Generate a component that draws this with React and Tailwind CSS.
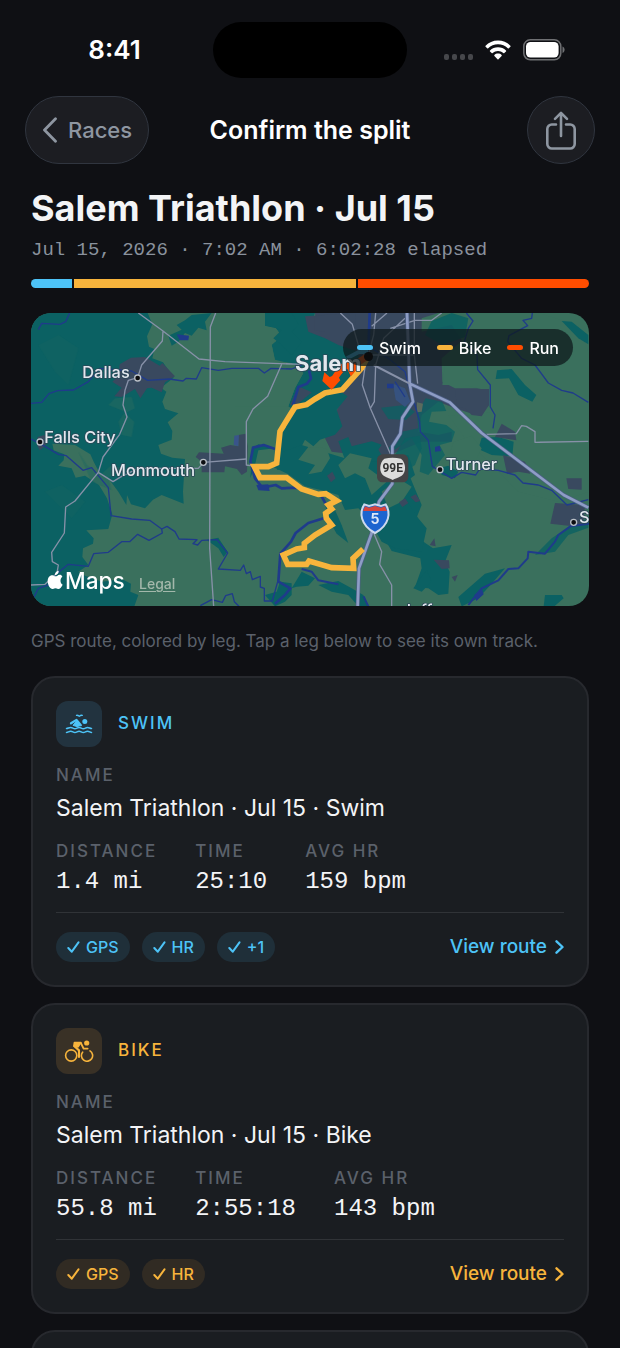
import React from "react";

const SANS = "font-['Inter','Liberation_Sans',sans-serif]";
const MONO = "font-['Liberation_Mono',monospace]";

function WifiIcon() {
  return (
    <svg viewBox="0 0 26 20" className="h-5 w-[26px]" fill="#fff" aria-hidden="true">
      <path d="M13 0.6C18 0.6 22.4 2.6 25.4 5.7c.3.3.3.7 0 1l-1.6 1.6c-.3.3-.7.3-1 0C20.200 5.700 16.800 4.300 13 4.300S5.800 5.700 3.200 8.300c-.3.3-.7.3-1 0L.6 6.700c-.3-.3-.3-.7 0-1C3.600 2.600 8 .6 13 .6z" />
      <path d="M13 7.200c3.100 0 5.900 1.200 8 3.200.3.3.3.700 0 1l-1.700 1.600c-.3.3-.700.3-1 0-1.400-1.300-3.300-2.100-5.300-2.100s-3.900.800-5.300 2.100c-.3.3-.700.3-1 0L5 11.400c-.3-.3-.3-.700 0-1 2.100-2 4.900-3.200 8-3.200z" />
      <path d="M13 13.600c1.400 0 2.700.5 3.600 1.400.3.3.3.700 0 1l-3.100 3.200c-.3.3-.700.3-1 0L9.400 16c-.3-.3-.3-.700 0-1 .9-.9 2.200-1.400 3.600-1.400z" />
    </svg>
  );
}

function BatteryIcon() {
  return (
    <svg viewBox="0 0 42 22" className="h-[22px] w-[42px]" aria-hidden="true">
      <rect x="0.800" y="0.800" width="37" height="20" rx="6.500" fill="none" stroke="#6f7073" strokeWidth="1.500" />
      <rect x="3" y="3" width="32.600" height="15.600" rx="4.500" fill="#fff" />
      <path d="M39.500 7.500c1.300.5 2.100 1.800 2.100 3.300s-.8 2.800-2.100 3.300z" fill="#6f7073" />
    </svg>
  );
}

function StatusBar() {
  return (
    <div className="grid grid-cols-[1fr_auto_1fr] items-center pt-[22px]">
      <div className="pl-4 text-center text-[26px] font-semibold leading-8 text-white">8:41</div>
      <div className="h-14 w-[194px] rounded-full bg-black" />
      <div className="flex items-center justify-end gap-3 pr-[55px]">
        <div className="flex gap-[3px] pt-[13px]">
          {[0, 1, 2, 3].map((n) => (
            <span key={n} className="h-[6px] w-[5px] rounded-[2px] bg-[#46474b]" />
          ))}
        </div>
        <WifiIcon />
        <BatteryIcon />
      </div>
    </div>
  );
}

function NavBar() {
  return (
    <header className="grid grid-cols-[1fr_auto_1fr] items-center px-[25px] pt-[18px]">
      <button
        type="button"
        className="flex h-[68px] w-[124px] items-center gap-[10px] rounded-full border border-[#30353f] bg-[#1c1d22] pl-4 text-[22px] font-medium text-[#8e96a1]"
      >
        <svg viewBox="0 0 16 26" className="h-[26px] w-4" fill="none" stroke="currentColor" strokeWidth="2.800" strokeLinecap="round" strokeLinejoin="round" aria-hidden="true">
          <path d="M13.500 1.800 2.500 13l11 11.200" />
        </svg>
        Races
      </button>
      <h2 className="text-[25px] font-semibold leading-8 text-white">Confirm the split</h2>
      <button
        type="button"
        aria-label="Share"
        className="flex size-[68px] items-center justify-center justify-self-end rounded-full border border-[#30353f] bg-[#1c1d22] text-[#8e96a1]"
      >
        <svg viewBox="0 0 32 40" className="h-10 w-8" fill="none" stroke="currentColor" strokeWidth="2.600" strokeLinecap="round" strokeLinejoin="round" aria-hidden="true">
          <path d="M11 14.500H7A4.500 4.500 0 0 0 2.300 19V34A4.500 4.500 0 0 0 7 38.500h18a4.500 4.500 0 0 0 4.700-4.500V19a4.500 4.500 0 0 0-4.700-4.500h-4M16 26V3M10 8.800 16 2.800l6 6" />
        </svg>
      </button>
    </header>
  );
}

const TEAL = "#0b6163";
const URBAN = "#39495f";
const GREEN = "#3a705d";

function MapDrawing() {
  return (
    <svg viewBox="18 24 1674 879" className="block h-auto w-full" role="img" aria-label="GPS route near Salem">
      <rect x="18" y="24" width="1674" height="880" fill={GREEN} />

      {/* forest, west side */}
      <g fill={TEAL}>
        <path d="M18 24H368L382 58 366 94 372 125 388 132 382 160 414 172 446 218 408 248 424 260 412 290 420 312 460 325 428 352 442 378 440 404 400 420 408 446 442 458 480 462 474 560 476 596 410 570 384 584 360 610 318 598 306 570 304 600 280 560 250 520 224 504 206 470 196 448 150 420 82 416 86 436 118 448 116 466 100 482 140 490 152 518 180 512 222 540 246 580 262 628 250 672 184 676 206 700 204 716 174 730 172 756 190 780 160 800 180 812 230 830 290 822 318 836 316 860 340 870 328 904H18z" />
        <path d="M455 60 480 46 500 30 560 24 540 50 545 76 520 68 500 92 480 84 460 110 440 122 430 92 470 74z" />
        <path d="M714 142 738 146 736 172 716 166z" />
        <path d="M545 705 580 698 608 740 596 756 580 730z" />
        <path d="M755 860 765 830 800 835 800 870 780 890 750 904 720 870z" />
        <path d="M800 850 830 800 870 820 850 842 815 845z" />
        <path d="M682 430 700 418 750 430 700 436 690 480 676 520z" />
      </g>
      <g fill="#236a61" opacity=".6">
        <path d="M250 300 270 280 320 276 330 310 300 325 328 350 320 396 290 390 280 350 300 320z" />
        <path d="M160 440 186 480 225 510 260 480 290 490 250 520 260 556 200 530z" />
        <path d="M40 120 100 90 160 130 130 240 90 200zM60 560 110 540 180 590 140 640z" opacity=".35" />
      </g>

      {/* towns, west side */}
      <g fill={URBAN}>
        <path d="M284 178 318 158 360 156 384 170 404 182 412 174 450 214 420 232 410 262 380 248 366 250 346 280 330 252 290 276 268 274 290 248 262 230 280 212z" />
        <path d="M512 456 522 442 560 444 596 446 588 428 616 420 640 424 640 390 662 386 668 424 666 500 650 510 636 492 600 484 598 502 530 502 530 470z" />
        <path d="M38 396 58 390 68 406 60 424 44 436 36 420z" />
      </g>
      <path d="M628 392 642 390 640 424 626 420z" fill="#39548a" />

      <g transform="translate(840 0)">
        {/* Salem and the country east of it */}
        <path d="M30 24H400L470 40 480 100 410 160 412 230 450 250 550 250 552 300 520 332 450 310 400 290 350 330 340 380 400 390 440 380 440 410 350 410 250 452 214 452 200 430 150 432 130 446 80 440 60 400 90 340 110 260 20 210 40 120z" fill={URBAN} />
        <path d="M350 40 400 24H640L700 24 820 60 850 140V560L760 590 640 560 480 400 430 330 500 332 560 320 560 260 480 240 412 240 420 180 480 120 440 60 350 80z" fill={GREEN} />
        <path d="M380 48 440 24 490 40 480 96 412 120 360 90z" fill={TEAL} opacity=".85" />
        <path d="M452 252 552 252 552 300 530 334 500 330 480 310 454 306z" fill={URBAN} />
        <g fill={TEAL}>
          <path d="M228 308 300 300 330 320 302 345 250 342z" opacity=".75" />
          <path d="M350 300 362 280 412 290 424 318 380 320 372 350 424 360 450 380 440 410 404 420 420 450 370 510 344 500 350 450 320 400 290 420 260 440 250 430 290 380 340 370 336 330z" opacity=".75" />
          <path d="M530 398 580 396 626 410 622 454 560 450 520 432z" />
          <path d="M576 196 620 192 660 240 694 270 682 290 640 270 612 220 572 222z" />
          <path d="M770 48 800 50 850 90V118L820 100z" />
          <path d="M300 400 344 392 350 430 330 480 300 500 270 450z" opacity=".75" />
          <path d="M300 480 350 600 330 650 350 680 340 700 384 730 440 720 420 770 434 800 430 866 400 870 370 850 330 846 350 790 346 760 260 738 232 690 240 600z" />
          <path d="M400 490 430 482 460 500 450 520 410 510z" />
          <path d="M470 904 460 876 540 806 600 790 560 836 520 880z" />
          <path d="M720 870 770 870 776 880 748 904H716z" />
          <path d="M740 700 800 660 850 640V668L790 690 750 740 690 750z" opacity=".8" />
        </g>
        <g fill={GREEN}>
          <path d="M446 410 500 392 530 430 510 470 460 460 436 440z" />
        </g>
        <g fill={URBAN}>
          <path d="M590 356 630 380 634 406 570 396z" />
          <path d="M594 450 660 470 676 506 640 500 606 506z" />
          <path d="M784 520H830V554L790 552z" />
          <path d="M750 594 840 600 834 660 790 662 736 656z" />
          <path d="M374 720 388 700 392 724zM386 764 432 766 434 790 410 792zM440 816 458 810 450 830z" />
        </g>
        <path d="M264 236 300 250 316 290 300 306 272 284z" fill="#36527f" />
        <path d="M336 292 354 296 350 320 336 322z" fill="#5b6b5e" />
      </g>

      {/* Willamette valley south of Salem */}
      <g transform="translate(630 24)" fill={TEAL}>
        <path d="M90 0H240L222 45 250 50 300 70 350 95 372 130 352 160 350 190 320 232 270 232 225 262 172 288 160 280 180 225 205 180 190 160 160 150 120 140 110 95 140 70 122 45 90 38z" />
        <path d="M180 290 215 278 270 245 320 238 338 250 305 290 322 340 300 365 255 380 235 400 210 380 190 420 215 440V470H126L140 362z" />
        <path d="M310 385 340 372 350 400 410 385 440 395 430 410 460 460 440 480 330 440z" />
      </g>
      <g transform="translate(630 450)" fill={TEAL}>
        <path d="M135 -6 200 -30 330 10 420 20 520 0 540 60 500 90 470 100 510 130 550 190 575 220 560 290 480 280 440 260 400 190 370 160 330 165 310 120 270 108 210 94 160 58 110 34z" />
        <path d="M270 150 300 165 320 210 340 264 305 236 288 206z" />
        <path d="M250 390 310 378 350 400 385 420 400 454H370L340 420 290 410z" />
        <path d="M535 400 575 345 590 380 560 410z" />
      </g>
      <g fill={GREEN}>
        <path d="M630 24H720V62L752 69 770 94 740 119 750 169 800 174 835 204 810 249 790 304 630 304z" opacity=".999" />
        <path d="M820 464 850 426 905 430 915 460 890 500 850 508 870 480z" />
        <path d="M940 480 975 445 1040 460 1030 490 1085 530 1040 570 1020 520 990 505 960 520z" />
        <path d="M1070 560 1120 520 1160 545 1130 590 1090 610z" />
      </g>
      <g fill={URBAN}>
        <path d="M840 34 990 24 1000 140 940 120 900 100 850 80z" />
        <path d="M868 34 900 30 900 80 868 76z" />
        <path d="M820 244 860 262 815 300 795 300z" />
        <path d="M906 512 922 500 932 520 918 532zM1122 592 1140 580 1150 594 1132 606zM1156 576 1172 568 1186 588 1172 592z" />
      </g>
      <path d="M720 24H800L822 60 800 80 830 110 800 150 770 120 745 100 770 75 752 69 720 62z" fill={TEAL} />

      {/* rivers */}
      <g fill="none" stroke="#1f3b8b" strokeWidth="4" strokeLinejoin="round">
        <path d="M40 74 50 55 105 58 122 50 134 24M18 295 50 292 72 266 98 257 146 255 190 230 225 190 320 198 368 226 432 222 474 228 484 220 514 222 530 188 580 196 620 190 700 190 718 204 738 190 800 192 830 180" />
        <path d="M18 402 60 424 100 448 124 452 174 496 200 488 250 548 258 632 320 642 374 646 410 672 412 684 372 706 338 688 314 710 290 710 250 742 206 746 190 784 130 778 90 810 70 840 40 850 20 890" />
        <path d="M410 672 426 664 450 680 462 702 516 704 504 716 518 720 530 706 576 704 608 744 580 792 646 796 656 780 664 806 676 800 682 824 706 814 706 846 718 850 718 888 742 888 758 830" />
        <path d="M526 902 560 884 592 892 602 872 622 866 628 890 642 904" />
      </g>
      <g fill="none" stroke="#1f3b8b" strokeWidth="8" strokeLinejoin="round">
        <path d="M852 196 858 220 846 236 820 246 804 300M750 432 716 420 684 428 676 470 690 520 712 548 752 540 770 550 820 548 890 574 904 600" />
        <path d="M896 640 850 654 812 684 798 710 766 746 760 830 796 850 780 870 750 896" />
        <path d="M1034 24 1030 140" />
        <path d="M830 792 860 800 880 826 940 838M1016 874 1030 904" strokeWidth="6" />
        <path d="M1692 656 1636 664 1600 690 1590 710 1560 746 1510 740 1508 760 1480 790 1450 792 1420 826 1370 850 1330 900" strokeWidth="6" />
      </g>
      <path d="M455 88 492 92 490 106 464 106z" fill="#1f3b8b" />
      <path d="M694 540 730 538 734 558 700 556z" fill="#1f3b8b" />
      <path d="M1086 236H1106V250H1086zM1230 426 1244 422 1248 438 1230 440zM1348 870 1370 850 1376 868 1354 888z" fill="#1f3b8b" />
      <g fill="none" stroke="#1f3b8b" strokeWidth="4" strokeLinejoin="round" transform="translate(840 0)">
        <path d="M484 24 504 48 490 70 478 110 516 150 518 194 556 240 556 306 570 330 564 370" />
        <path d="M682 24 680 40 654 46 668 62 612 92 608 110 650 160 690 180 730 234 770 256 804 264 850 292" />
        <path d="M330 300 344 350 346 380 370 406 382 484 440 520 470 502 512 510 524 492 580 496 630 510 654 534 700 540 740 556 786 600 850 584" />
        <path d="M200 130 250 160 300 200 310 240 330 300M270 230 300 276" />
      </g>

      {/* minor roads */}
      <g fill="none" stroke="#8791a8" strokeWidth="4" strokeLinejoin="round">
        <path d="M340 24 414 78 522 162 600 170 830 178M414 78 412 108 350 180 338 218 310 226 300 256 294 300 306 336 284 388 234 456 220 502 150 588 122 606 118 684 80 742 82 770 100 780 96 804 60 838 18 840M220 502 264 530 290 514 340 490 520 490 536 472 664 462" />
        <path d="M572 24 556 66 554 730 566 904M770 178 728 274 684 312 664 350V480L690 484" />
        <g transform="translate(840 0)">
          <path d="M106 24 142 58 160 120 184 160 172 240 196 310 256 446M212 24 206 90 190 150M246 24 200 64M300 40 236 100 212 180 208 290 196 310M256 70 330 46 380 46 410 24M328 24V150L338 236M200 150H326" />
          <path d="M206 684 230 740 224 778 260 840V904M544 388 634 386 650 362 664 364 690 380V412L850 409" />
        </g>
      </g>

      {/* highways */}
      <g transform="translate(840 0)" fill="none" strokeLinejoin="round">
        <g stroke="#4d5f86" strokeWidth="12">
          <path d="M306 24 314 236 324 290 292 338 286 386 262 424V536L222 590 200 684 162 790 158 904M314 236 434 292 530 384 776 570 850 608" />
        </g>
        <path d="M306 24 314 236 324 290 292 338 286 386 262 424V536L222 590 200 684 162 790 158 904M314 236 434 292 530 384 776 570 850 608" stroke="#8e9dc5" strokeWidth="8" />
        <path d="M206 180 314 236" stroke="#8791a8" strokeWidth="6" />
      </g>

      {/* recorded track */}
      <g fill="none" strokeLinejoin="miter">
        <path d="M966 160 1000 142 1030 140" stroke="#4dc3f7" strokeWidth="12" />
        <path d="M1026 160 1010 189 952 254 900 264 870 282 845 299 810 306 765 379 755 474 730 485 688 485 705 518 785 518 830 552 880 568 902 566 935 587 910 600 920 612 902 625 904 640 920 660 870 690 838 715 838 728 815 732 775 750 788 778 845 778 852 768 920 788 986 790 984 760 1014 732" stroke="#f7b43c" strokeWidth="17" />
        <path d="M918 236 938 206 954 186 972 178 980 196 1000 172 1024 156" stroke="#ff4d00" strokeWidth="20" />
      </g>
      <path d="M892 228 898 202 914 216 936 208 946 226 920 254z" fill="#ff4d00" />

      {/* shields */}
      <g transform="translate(840 0)">
        <rect x="216" y="448" width="94" height="84" rx="16" fill="#444446" />
        <path d="M238 461Q262 455 288 461C304 474 304 502 290 512 278 520 270 520 263 525 256 520 248 520 236 512 222 502 222 474 238 461z" fill="#dcdcdc" />
        <text x="263" y="500" textAnchor="middle" fontSize="36" fontWeight="700" fontFamily="'Roboto', sans-serif" fill="#333">99E</text>
        <path d="M178 598 192 603 210 598 228 603 242 598C258 622 254 660 210 684 166 660 162 622 178 598z" fill="#1c64cf" stroke="#cdd9ee" strokeWidth="6" />
        <path d="M180 604 192 608 210 603 228 608 240 604 246 618H174z" fill="#d4453e" />
        <text x="210" y="658" textAnchor="middle" fontSize="42" fontWeight="700" fontFamily="Inter, sans-serif" fill="#dce6f7">5</text>
      </g>

      {/* places */}
      <g fill="#0c0d10" stroke="#b9bfc6" strokeWidth="4">
        <circle cx="338" cy="219" r="9" />
        <circle cx="45" cy="411" r="9" />
        <circle cx="535" cy="472" r="9" />
        <circle cx="1245" cy="494" r="9" />
        <circle cx="1646" cy="652" r="9" />
      </g>
      <g fill="#e2e8ee" stroke="#2c4757" strokeWidth="5" strokeLinejoin="round" paintOrder="stroke" fontFamily="Inter, 'Liberation Sans', sans-serif" fontWeight="500" fontSize="49">
        <text x="172" y="219">Dallas</text>
        <text x="58" y="414">Falls City</text>
        <text x="258" y="512">Monmouth</text>
        <text x="1262" y="495">Turner</text>
        <text x="1662" y="653">S</text>
        <text x="1130" y="932">Jefferson</text>
        <text x="810" y="199" fontSize="66" fontWeight="700">Salem</text>
      </g>
      <g fill="#fff">
        <path d="M96 813C102 808 109 808 112 815 105 820 104 834 113 839 110 846 104 853 99 852 94 850 90 849 84 852 76 854 68 840 68 828 69 813 80 809 86 812 90 814 93 814 96 813zM90 810C89 804 94 798 101 797 102 804 96 810 90 810z" />
        <text x="120" y="853" fontFamily="Inter, sans-serif" fontWeight="500" fontSize="68">Maps</text>
      </g>
    </svg>
  );
}

const LEGEND = [
  { name: "Swim", color: "bg-[#4dc3f7]" },
  { name: "Bike", color: "bg-[#f7b43c]" },
  { name: "Run", color: "bg-[#ff4d00]" },
];

function RouteMap() {
  return (
    <div className="relative mt-[25px] overflow-hidden rounded-[20px]">
      <MapDrawing />
      <ul className="absolute right-4 top-4 flex h-[37px] items-center gap-4 rounded-full bg-[#0f1a1c]/75 px-[14px] text-base font-medium text-white">
        {LEGEND.map((l) => (
          <li key={l.name} className="flex items-center gap-[6px]">
            <span className={`h-[5px] w-4 rounded-full ${l.color}`} />
            {l.name}
          </li>
        ))}
      </ul>
      <span className="absolute left-[333px] top-[39px] size-[9px] rounded-full bg-[#0b0c0e]" />
      <a href="#legal" className="absolute bottom-3 left-[108px] text-sm font-medium text-[#a3b8ab] underline underline-offset-2">
        Legal
      </a>
    </div>
  );
}

function SwimIcon() {
  return (
    <svg viewBox="0 0 28 20" className="h-5 w-7" fill="none" stroke="currentColor" strokeLinecap="round" strokeLinejoin="round" aria-hidden="true">
      <path d="M11.500 1.300c1.300-.2 2 .3 2.800 1 .8-.7 1.700-1.200 3-1" strokeWidth="1.300" />
      <circle cx="19.800" cy="7.600" r="2.500" fill="currentColor" stroke="none" />
      <path d="M6 9.300 11.500 6l4.300 5.200" strokeWidth="2.300" />
      <path d="M11.800 7 8 11.300c1.600.1 2.500 1.300 4 1.300 1.500 0 2.200-1 3.600-1.200z" fill="currentColor" strokeWidth="1" />
      <path d="M1.500 14.600c1.500 0 2.400-1.200 4.200-1.200 2 0 2.400 1.300 4.200 1.300 1.900 0 2.300-1.300 4.200-1.300s2.300 1.300 4.200 1.300 2.300-1.300 4.200-1.300c1.800 0 2.500 1.200 4 1.200M1.500 18.400c1.500 0 2.400-1.200 4.200-1.200 2 0 2.400 1.300 4.200 1.300 1.900 0 2.300-1.300 4.200-1.300s2.300 1.300 4.200 1.300 2.300-1.300 4.200-1.300c1.800 0 2.500 1.200 4 1.200" strokeWidth="1.500" />
    </svg>
  );
}

function BikeIcon() {
  return (
    <svg viewBox="0 0 30 22" className="h-[22px] w-[30px]" fill="none" stroke="currentColor" strokeLinecap="round" strokeLinejoin="round" aria-hidden="true">
      <circle cx="7.200" cy="15.500" r="5.600" strokeWidth="1.600" />
      <path d="M18.600 12.200A5.600 5.600 0 1 0 26 10.900" strokeWidth="1.600" />
      <circle cx="22.700" cy="3" r="2.600" fill="currentColor" stroke="none" />
      <path d="M10.500 2.600h6.200L14 6.800 10 6z" fill="currentColor" strokeWidth="1.800" />
      <path d="M16.800 2.900 19.600 8.600h4" strokeWidth="1.900" />
      <path d="M10.400 6.200 15 10.400V17" strokeWidth="2.100" />
    </svg>
  );
}

const LEGS = [
  {
    leg: "Swim",
    Icon: SwimIcon,
    text: "text-[#4dc3f7]",
    tile: "bg-[#22333f]",
    chip: "bg-[#1f2f39]",
    stats: [["Distance", "1.4 mi"], ["Time", "25:10"], ["Avg HR", "159 bpm"]],
    sources: ["GPS", "HR", "+1"],
  },
  {
    leg: "Bike",
    Icon: BikeIcon,
    text: "text-[#f7b43c]",
    tile: "bg-[#393126]",
    chip: "bg-[#312b23]",
    stats: [["Distance", "55.8 mi"], ["Time", "2:55:18"], ["Avg HR", "143 bpm"]],
    sources: ["GPS", "HR"],
  },
];

const CARD = "rounded-3xl border-2 border-[#27292e] bg-[#1a1d21] px-[23px] py-[23px]";
const LABEL = "text-[17px] leading-5 font-medium uppercase tracking-[2px] text-[#5b616b]";

function LegCard({ leg, Icon, text, tile, chip, stats, sources }) {
  return (
    <section className={CARD}>
      <div className={`flex items-center gap-4 ${text}`}>
        <div className={`flex size-[46px] items-center justify-center rounded-xl ${tile}`}>
          <Icon />
        </div>
        <h3 className="text-[17px] font-medium uppercase tracking-[2px]">{leg}</h3>
      </div>
      <div className={`mt-[18px] ${LABEL}`}>Name</div>
      <div className="mt-2 text-[23px] leading-[30px] text-[#f3f4f6]">Salem Triathlon · Jul 15 · {leg}</div>
      <dl className="mt-[18px] flex gap-[38px]">
        {stats.map(([name, value]) => (
          <div key={name}>
            <dt className={LABEL}>{name}</dt>
            <dd className={`mt-[6px] text-2xl leading-[30px] text-[#f3f4f6] ${MONO}`}>{value}</dd>
          </div>
        ))}
      </dl>
      <div className={`mt-[15px] flex items-center justify-between border-t border-[#303337] pt-[19px] ${text}`}>
        <ul className="flex gap-3">
          {sources.map((s) => (
            <li key={s} className={`flex h-[30px] items-center gap-[6px] rounded-full px-[11px] text-base font-medium ${chip}`}>
              <svg viewBox="0 0 13 12" className="h-3 w-[13px]" fill="none" stroke="currentColor" strokeWidth="2" strokeLinecap="round" strokeLinejoin="round" aria-hidden="true">
                <path d="M1.300 7 4.800 10.700 11.500 1.300" />
              </svg>
              {s}
            </li>
          ))}
        </ul>
        <a href={`#${leg.toLowerCase()}`} className="flex items-center gap-2 text-[19px] font-medium leading-7">
          View route
          <svg viewBox="0 0 9 14" className="h-[14px] w-[9px]" fill="none" stroke="currentColor" strokeWidth="2.400" strokeLinecap="round" strokeLinejoin="round" aria-hidden="true">
            <path d="M1.500 1.300 7.500 7 1.500 12.700" />
          </svg>
        </a>
      </div>
    </section>
  );
}

export default function App() {
  return (
    <div className={`h-screen overflow-hidden bg-[#0f1014] ${SANS}`}>
      <StatusBar />
      <NavBar />
      <main className="px-[31px] pt-6">
        <h1 className="text-4xl font-bold leading-10 text-[#f3f4f6]">Salem Triathlon · Jul 15</h1>
        <p className={`mt-[10px] text-[19px] leading-6 text-[#8a929d] ${MONO}`}>Jul 15, 2026 · 7:02 AM · 6:02:28 elapsed</p>
        <div className="mt-[17px] flex h-[9px] gap-[2px] overflow-hidden rounded-full">
          <span className="grow-[41] bg-[#4dc3f7]" />
          <span className="grow-[282] bg-[#f7b43c]" />
          <span className="grow-[231] bg-[#ff4d00]" />
        </div>
        <RouteMap />
        <p className="mt-6 text-[17px] leading-[22px] text-[#5b616b]">GPS route, colored by leg. Tap a leg below to see its own track.</p>
        <div className="mt-6 flex flex-col gap-4">
          {LEGS.map((l) => (
            <LegCard key={l.leg} {...l} />
          ))}
          <section className={`h-[311px] ${CARD}`} />
        </div>
      </main>
    </div>
  );
}
